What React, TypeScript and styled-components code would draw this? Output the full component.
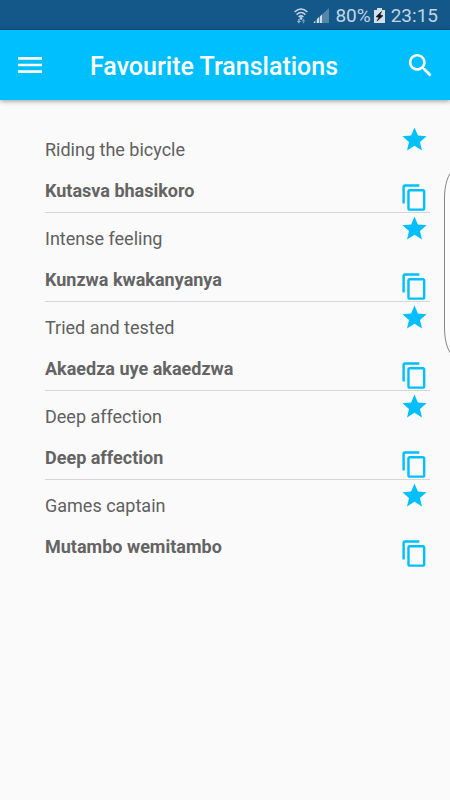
import React from "react";
import styled, { createGlobalStyle } from "styled-components";

const GlobalStyle = createGlobalStyle`
  *, *::before, *::after { box-sizing: border-box; }
  body {
    margin: 0;
    background: #fafafa;
    font-family: Roboto, "Liberation Sans", sans-serif;
  }
`;

const Screen = styled.div`
  position: relative;
  min-height: 100vh;
  overflow: hidden;
  background: #fafafa;
`;

const StatusBar = styled.div`
  display: flex;
  align-items: center;
  justify-content: flex-end;
  height: 30px;
  padding: 2px 12px 0 0;
  background: #135889;
  border-bottom: 1px solid #124a80;
  color: #c3d5e5;
  font-size: 19px;
  line-height: 28px;
`;

const StatusIcon = styled.svg<{ $gap: number }>`
  display: block;
  flex: none;
  margin-right: ${(p) => p.$gap}px;
`;

const Battery = styled.span`
  margin-right: 3px;
`;

const AppBar = styled.header`
  display: flex;
  align-items: center;
  height: 70px;
  padding: 0 14px;
  background: #00bfff;
  color: #ffffff;
  box-shadow: 0 1px 5px rgba(0, 0, 0, 0.4);
`;

const Title = styled.h1`
  flex: 1;
  margin: 0 0 0 44px;
  padding-top: 3px;
  font-size: 25px;
  font-weight: 500;
  line-height: 32px;
  white-space: nowrap;
`;

const IconButton = styled.button`
  display: block;
  flex: none;
  padding: 0;
  border: 0;
  background: none;
  color: inherit;
  cursor: pointer;

  svg {
    display: block;
    fill: currentColor;
  }
`;

const List = styled.ul`
  margin: 0;
  padding: 24px 20px 0 45px;
  list-style: none;
`;

const Item = styled.li`
  display: flex;
  justify-content: space-between;
  height: 89px;
  border-bottom: 1px solid #d6d6d6;

  &:last-child {
    border-bottom-color: transparent;
  }
`;

const Texts = styled.div`
  padding-top: 14px;
`;

const Phrase = styled.p<{ $strong?: boolean }>`
  margin: 0 0 17px;
  color: ${(p) => (p.$strong ? "#646464" : "#606060")};
  font-size: 18px;
  font-weight: ${(p) => (p.$strong ? 700 : 400)};
  line-height: 24px;
`;

const Actions = styled.div`
  display: flex;
  flex-direction: column;
  justify-content: space-between;
  padding: 1px 1px 0 0;
  color: #00bfff;
`;

const EdgeHandle = styled.div`
  position: absolute;
  top: 170px;
  right: -16px;
  width: 22px;
  height: 186px;
  border: 1px solid #858585;
  border-radius: 11px / 28px;
  background: #fcfcfc;
`;

const translations = [
  { source: "Riding the bicycle", target: "Kutasva bhasikoro" },
  { source: "Intense feeling", target: "Kunzwa kwakanyanya" },
  { source: "Tried and tested", target: "Akaedza uye akaedzwa" },
  { source: "Deep affection", target: "Deep affection" },
  { source: "Games captain", target: "Mutambo wemitambo" },
];

const STAR = "M12 17.27L18.18 21l-1.64-7.03L22 9.24l-7.19-.61L12 2 9.19 8.63 2 9.24l5.46 4.73L5.82 21z";
const COPY =
  "M16 1H4c-1.1 0-2 .9-2 2v14h2V3h12V1zm3 4H8c-1.1 0-2 .9-2 2v14c0 1.1.9 2 2 2h11c1.1 0 2-.9 2-2V7c0-1.1-.9-2-2-2zm0 16H8V7h11v14z";
const MENU = "M3 18h18v-2H3v2zm0-5h18v-2H3v2zm0-7v2h18V6H3z";
const SEARCH =
  "M15.5 14h-.79l-.28-.27C15.41 12.59 16 11.11 16 9.5 16 5.91 13.09 3 9.5 3S3 5.91 3 9.5 5.91 16 9.5 16c1.61 0 3.09-.59 4.23-1.57l.27.28v.79l5 4.99L20.49 19l-4.99-5zm-6 0C7.01 14 5 11.99 5 9.5S7.01 5 9.5 5 14 7.01 14 9.5 11.99 14 9.5 14z";

function Icon({ path, size }: { path: string; size: number }) {
  return (
    <svg width={size} height={size} viewBox="0 0 24 24" aria-hidden="true">
      <path d={path} />
    </svg>
  );
}

export default function App() {
  return (
    <Screen>
      <GlobalStyle />
      <StatusBar>
        <StatusIcon $gap={5} width="14" height="16" viewBox="0 0 14 16" aria-label="Wi-Fi">
          <g fill="none" stroke="#c3d5e5" strokeWidth="1.5">
            <path d="M.6 4Q7-2 13.4 4M2.6 6.6Q7 2.4 11.4 6.6M4.6 9Q7 6.8 9.4 9" />
          </g>
          <circle cx="7" cy="10.4" r="1.3" fill="#c3d5e5" />
          <path d="M2.8 13h1.3v-2h1.6v2H7l-2.1 2.4z" fill="#8fb0ca" />
          <path d="M7.4 13.2l2-2.6 2 2.6h-1.2v2H8.7v-2z" fill="#6795b8" />
        </StatusIcon>
        <StatusIcon $gap={6} width="16" height="16" viewBox="0 0 16 16" aria-label="Signal">
          <path d="M16 0v15H0z" fill="#5685ab" />
          <path d="M1 15v-1l1-1v2zM4 15v-4l2-2v6zM7 15V8.500l2-2V15z" fill="#d0deea" />
        </StatusIcon>
        <Battery>80%</Battery>
        <StatusIcon $gap={6} width="11" height="15" viewBox="0 0 11 15" aria-label="Charging">
          <path d="M3 0h5v2h3v13H0V2h3z" fill="#d3dfe9" />
          <path d="M7.500 3.500L2 8.800l3 .5L3 13l6-5.300-3-.6z" fill="#0b1620" stroke="#0b1620" strokeWidth=".6" />
        </StatusIcon>
        <span>23:15</span>
      </StatusBar>
      <AppBar>
        <IconButton aria-label="Open menu">
          <Icon path={MENU} size={32} />
        </IconButton>
        <Title>Favourite Translations</Title>
        <IconButton aria-label="Search">
          <Icon path={SEARCH} size={31} />
        </IconButton>
      </AppBar>
      <main>
        <List>
          {translations.map((item) => (
            <Item key={item.source}>
              <Texts>
                <Phrase>{item.source}</Phrase>
                <Phrase $strong>{item.target}</Phrase>
              </Texts>
              <Actions>
                <IconButton aria-label={`Remove ${item.source} from favourites`}>
                  <Icon path={STAR} size={29} />
                </IconButton>
                <IconButton aria-label={`Copy ${item.target}`}>
                  <Icon path={COPY} size={29} />
                </IconButton>
              </Actions>
            </Item>
          ))}
        </List>
      </main>
      <EdgeHandle />
    </Screen>
  );
}
